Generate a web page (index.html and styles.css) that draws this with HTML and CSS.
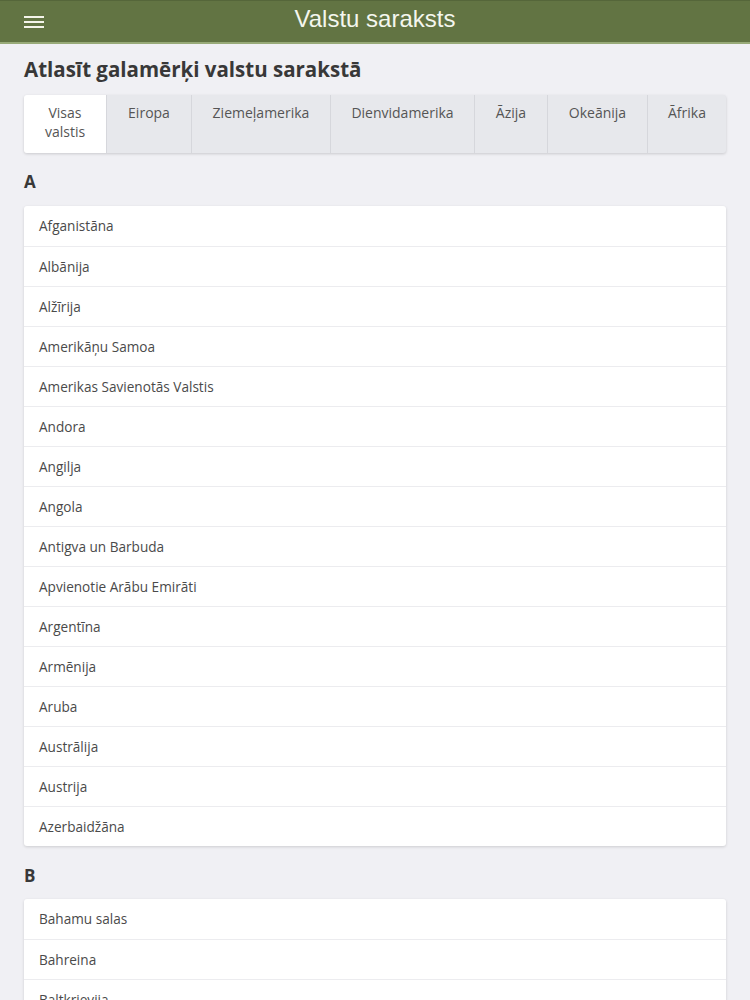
FILE: index.html
```html
<!DOCTYPE html>
<html lang="lv">
<head>
<meta charset="utf-8">
<title>Valstu saraksts</title>
<link rel="stylesheet" href="styles.css">
</head>
<body>
<header class="topbar">
  <button class="menu-btn" aria-label="Izvēlne">
    <svg width="20" height="14" viewBox="0 0 20 14"><path d="M1 2h18M1 7h18M1 12h18" stroke="#f4f4ea" stroke-width="2" stroke-linecap="square"/></svg>
  </button>
  <h1 class="topbar-title">Valstu saraksts</h1>
</header>
<main class="content">
  <h2 class="page-title">Atlasīt galamērķi valstu sarakstā</h2>
  <nav class="tabs">
    <div class="tab active">Visas<br>valstis</div>
    <div class="tab">Eiropa</div>
    <div class="tab">Ziemeļamerika</div>
    <div class="tab">Dienvidamerika</div>
    <div class="tab">Āzija</div>
    <div class="tab">Okeānija</div>
    <div class="tab">Āfrika</div>
  </nav>
  <h3 class="letter">A</h3>
  <ul class="card">
    <li>Afganistāna</li>
    <li>Albānija</li>
    <li>Alžīrija</li>
    <li>Amerikāņu Samoa</li>
    <li>Amerikas Savienotās Valstis</li>
    <li>Andora</li>
    <li>Angilja</li>
    <li>Angola</li>
    <li>Antigva un Barbuda</li>
    <li>Apvienotie Arābu Emirāti</li>
    <li>Argentīna</li>
    <li>Armēnija</li>
    <li>Aruba</li>
    <li>Austrālija</li>
    <li>Austrija</li>
    <li>Azerbaidžāna</li>
  </ul>
  <h3 class="letter letter-next">B</h3>
  <ul class="card">
    <li>Bahamu salas</li>
    <li>Bahreina</li>
    <li>Baltkrievija</li>
    <li>Bangladeša</li>
  </ul>
</main>
</body>
</html>
```
FILE: styles.css
```css
* { box-sizing: border-box; }
html, body { margin: 0; padding: 0; }
body {
  background: #f0f0f4;
  font-family: "Open Sans", "Noto Sans", sans-serif;
  color: #444;
  overflow: hidden;
}
.topbar {
  height: 44px;
  background: #627443;
  border-top: 1px solid #55663a;
  border-bottom: 2px solid #98aa78;
  display: flex;
  align-items: flex-start;
  justify-content: center;
  position: relative;
}
.menu-btn {
  position: absolute;
  left: 24px;
  top: 13px;
  background: none;
  border: 0;
  padding: 0;
  width: 22px;
  height: 16px;
  display: flex;
  align-items: center;
}
.topbar-title {
  margin: 0;
  font-family: "Liberation Sans", Arial, sans-serif;
  font-weight: 400;
  font-size: 24px;
  color: #f4f6ee;
  line-height: 36px;
  letter-spacing: 0;
}
.content {
  padding: 0 24px;
}
.page-title {
  margin: 12px 0 0 0;
  font-size: 20.5px;
  font-weight: 700;
  color: #383838;
  line-height: 27px;
}
.tabs {
  margin-top: 12px;
  display: grid;
  grid-template-columns: 82px 85px 139px 144px 73px 100px 1fr;
  height: 58px;
  background: #e7e8ec;
  border-radius: 3px;
  box-shadow: 0 1px 3px rgba(0,0,0,0.16);
  overflow: hidden;
}
.tab {
  text-align: center;
  font-size: 14px;
  line-height: 19px;
  color: #555;
  padding-top: 8px;
  border-left: 1px solid #d6d7dc;
}
.tab:first-child { border-left: 0; }
.tab.active { background: #fff; }
.letter {
  margin: 18px 0 0 0;
  font-size: 17px;
  font-weight: 700;
  color: #383838;
  line-height: 22px;
}
.letter-next { margin-top: 19px; }
.card {
  list-style: none;
  margin: 13px 0 0 0;
  padding: 0;
  background: #fff;
  border-radius: 3px;
  box-shadow: 0 1px 3px rgba(0,0,0,0.15);
}
.letter-next + .card { margin-top: 12px; }
.card li {
  height: 40px;
  line-height: 39px;
  padding-left: 15px;
  font-size: 13.6px;
  color: #4a4a4a;
  border-top: 1px solid #ececef;
}
.card li:first-child { border-top: 0; line-height: 40px; }
```
